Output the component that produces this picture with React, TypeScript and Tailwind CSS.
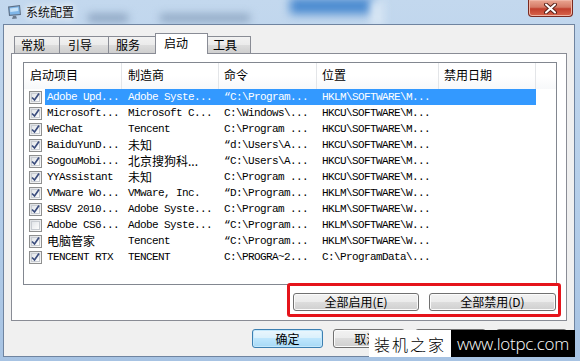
import React from "react";

type Row = { on: boolean; name: string; maker: string; cmd: string; loc: string; sel?: boolean };

const rows: Row[] = [
  { on: true, name: "Adobe Upd...", maker: "Adobe Syste...", cmd: "“C:\\Program...", loc: "HKLM\\SOFTWARE\\M...", sel: true },
  { on: true, name: "Microsoft...", maker: "Microsoft C...", cmd: "C:\\Windows\\...", loc: "HKCU\\SOFTWARE\\M..." },
  { on: true, name: "WeChat", maker: "Tencent", cmd: "C:\\Program ...", loc: "HKCU\\SOFTWARE\\M..." },
  { on: true, name: "BaiduYunD...", maker: "未知", cmd: "“d:\\Users\\A...", loc: "HKCU\\SOFTWARE\\M..." },
  { on: true, name: "SogouMobi...", maker: "北京搜狗科...", cmd: "“C:\\Users\\A...", loc: "HKCU\\SOFTWARE\\M..." },
  { on: true, name: "YYAssistant", maker: "未知", cmd: "C:\\Program ...", loc: "HKCU\\SOFTWARE\\M..." },
  { on: true, name: "VMware Wo...", maker: "VMware, Inc.", cmd: "“D:\\Program...", loc: "HKLM\\SOFTWARE\\W..." },
  { on: true, name: "SBSV 2010...", maker: "Adobe Syste...", cmd: "C:\\Program ...", loc: "HKLM\\SOFTWARE\\W..." },
  { on: false, name: "Adobe CS6...", maker: "Adobe Syste...", cmd: "“C:\\Program...", loc: "HKLM\\SOFTWARE\\W..." },
  { on: true, name: "电脑管家", maker: "Tencent", cmd: "“C:\\Program...", loc: "HKLM\\SOFTWARE\\W..." },
  { on: true, name: "TENCENT RTX", maker: "TENCENT", cmd: "C:\\PROGRA~2...", loc: "C:\\ProgramData\\..." },
];

const tabs = [
  { label: "常规", w: "w-[46px] pl-[6px]" },
  { label: "引导", w: "w-[50px] pl-[8px]" },
  { label: "服务", w: "w-[48px] pl-[7px]" },
  { label: "启动", w: "w-[53px] pl-[8px]", active: true },
  { label: "工具", w: "w-[44px] pl-[5px]" },
];

const cjk = /[\u4e00-\u9fff]/;
const mono = "font-['Liberation_Mono','Noto_Sans_CJK_SC',monospace] text-[11px] tracking-[-0.6px]";
const han = "font-['Noto_Sans_CJK_SC',sans-serif] text-[12px]";

const btn =
  "flex items-center justify-center rounded-[3px] border border-[#707070] bg-[linear-gradient(180deg,#f2f2f2_0%,#ebebeb_50%,#dddddd_50%,#cfcfcf_100%)] shadow-[inset_0_0_0_1px_#fbfbfb] text-[12px] text-black";

function Cell({ text, className }: { text: string; className: string }) {
  return (
    <div className={`${className} ${cjk.test(text) ? han : mono} overflow-hidden whitespace-nowrap leading-[16px]`}>
      {text}
    </div>
  );
}

function Check({ on }: { on: boolean }) {
  return (
    <div className="flex h-[13px] w-[13px] items-center justify-center border border-[#8e8f8f] bg-[linear-gradient(135deg,#dcdfe3,#fbfbfb)]">
      <div className="flex h-[9px] w-[9px] items-center justify-center border border-[#c8ccd2] bg-[linear-gradient(135deg,#e2e5e9,#fdfdfd)]">
        {on && (
          <svg width="9" height="9" viewBox="0 0 9 9" className="overflow-visible">
            <path d="M1 4.5 L3.5 7 L8 0.5" fill="none" stroke="#3b4d7e" strokeWidth="1.7" />
          </svg>
        )}
      </div>
    </div>
  );
}

function AppIcon() {
  return (
    <svg width="16" height="16" viewBox="0 0 16 16">
      <path d="M1 2.5 L13 1 L14 11 L2 12 Z" fill="#5d6f86" />
      <path d="M2.3 3.5 L12.2 2.3 L12.9 9.9 L3 10.8 Z" fill="#7fb6e8" />
      <path d="M3 4.5 L11 3.6 L11.4 7 L3.4 8 Z" fill="#c6e2f8" />
      <path d="M6 12 L9 11.7 L10 14.5 L5 15 Z" fill="#6c7c90" />
    </svg>
  );
}

export default function App() {
  return (
    <div className="relative h-[361px] w-[580px] overflow-hidden bg-[linear-gradient(180deg,#c3d8ee_0%,#b3cde9_60%,#a7c3e3_100%)] font-['Noto_Sans_CJK_SC',sans-serif]">
      {/* blurred things behind the glass */}
      <div className="absolute left-[88px] top-[14px] h-[8px] w-[40px] bg-[#8aa2bf] blur-[4px]" />
      <div className="absolute left-[160px] top-[14px] h-[8px] w-[90px] bg-[#8ea6c2] blur-[4px]" />
      <div className="absolute left-[290px] top-[-2px] h-[16px] w-[85px] bg-[#4a8ad0] blur-[5px]" />
      <div className="absolute left-[370px] top-[0px] h-[26px] w-[14px] bg-[#d8e6f4] blur-[4px]" />

      <div className="relative flex h-[24px] items-start">
        <div className="ml-[7px] mt-[4px]">
          <AppIcon />
        </div>
        <div className="ml-[3px] mt-[4px] text-[12px] leading-[16px] text-[#111] [text-shadow:0_0_6px_#fff,0_0_10px_#fff]">
          系统配置
        </div>
        <div className="ml-auto mr-[7px] flex h-[17px] w-[45px] items-center justify-center rounded-b-[4px] border border-t-0 border-[#7a2a20] bg-[linear-gradient(180deg,#eaa692_0%,#d57a66_45%,#c13f2d_55%,#d8664d_100%)] shadow-[inset_0_0_0_1px_#f0b5a5]">
          <svg width="13" height="11" viewBox="0 0 13 11">
            <path d="M2 1.5 L11 9.5 M11 1.5 L2 9.5" stroke="#5a2219" strokeWidth="4" strokeLinecap="round" />
            <path d="M2 1.5 L11 9.5 M11 1.5 L2 9.5" stroke="#fff" strokeWidth="2" strokeLinecap="round" />
          </svg>
        </div>
      </div>

      <div className="relative ml-[3px] h-[333px] w-[572px] border border-[#6f84a0] bg-[#f0f0f0] px-[7px] pt-[8px]">
        <div className="ml-[3px] flex h-[20px] items-end">
          {tabs.map((t, i) => (
            <div
              key={t.label}
              className={`${t.w} ${i > 0 ? "-ml-px" : ""} flex items-start border border-b-0 border-[#898c95] text-[12px] leading-[16px] text-black ${
                t.active
                  ? "relative z-10 -mb-px h-[21px] bg-white pt-[1px]"
                  : "h-[17px] bg-[linear-gradient(180deg,#f2f2f2_0%,#ebebeb_50%,#dddddd_50%,#cfcfcf_100%)] pt-0"
              }`}
            >
              {t.label}
            </div>
          ))}
        </div>

        <div className="h-[268px] border border-[#898c95] bg-white pl-[11px] pr-[9px] pt-[8px]">
          <div className="h-[223px] border border-[#828790] bg-white">
            <div className="flex h-[26px] bg-[linear-gradient(180deg,#ffffff_0%,#ffffff_50%,#f7f8fa_100%)] text-[12px] leading-[24px] text-black">
              <div className="w-[98px] border-r border-[#e3e5e8] pl-[6px]">启动项目</div>
              <div className="w-[97px] border-r border-[#e3e5e8] pl-[6px]">制造商</div>
              <div className="w-[98px] border-r border-[#e3e5e8] pl-[5px]">命令</div>
              <div className="w-[122px] border-r border-[#e3e5e8] pl-[5px]">位置</div>
              <div className="w-[97px] border-r border-[#e3e5e8] pl-[5px]">禁用日期</div>
            </div>
            {rows.map((r) => (
              <div key={r.name} className="flex h-[16px] items-center">
                <div className="flex w-[21px] items-center pl-[5px]">
                  <Check on={r.on} />
                </div>
                <div className={`flex h-[16px] w-[491px] ${r.sel ? "bg-[#3399ff] text-white" : "text-black"}`}>
                  <Cell text={r.name} className="w-[77px] pl-[2px]" />
                  <Cell text={r.maker} className="w-[97px] pl-[6px]" />
                  <Cell text={r.cmd} className="w-[98px] pl-[5px]" />
                  <Cell text={r.loc} className="w-[122px] pl-[5px]" />
                </div>
              </div>
            ))}
          </div>

          <div className="mr-px mt-[8px] flex justify-end gap-[10px]">
            <div className={`${btn} h-[18px] w-[126px]`}>全部启用(E)</div>
            <div className={`${btn} h-[18px] w-[127px]`}>全部禁用(D)</div>
          </div>
        </div>

        {/* bottom buttons; the last two sit fully under the watermark */}
        <div className="ml-[241px] mt-[8px] flex gap-[10px]">
          <div className="flex h-[19px] w-[72px] items-center justify-center rounded-[3px] border border-[#3c7fb1] bg-[linear-gradient(180deg,#eaf6fd_0%,#d9f0fc_50%,#bee6fd_50%,#a7d9f5_100%)] shadow-[inset_0_0_0_1px_#c4e8fc] text-[12px]">
            确定
          </div>
          <div className={`${btn} h-[19px] w-[72px] justify-start pl-[20px]`}>取消</div>
          <div className={`${btn} h-[19px] w-[72px]`} />
          <div className={`${btn} h-[19px] w-[72px]`} />
        </div>
      </div>

      {/* red annotation */}
      <div className="absolute left-[287px] top-[283px] h-[34px] w-[274px] rounded-[3px] border-[3px] border-[#e5141b]" />

      {/* watermark */}
      <div className="absolute left-[369px] top-[330px] flex h-[27px]">
        <div className="flex w-[82px] items-center justify-center bg-white font-['Noto_Sans_CJK_SC',serif] text-[16px] font-light tracking-[2px] text-black">
          装机之家
        </div>
        <div className="flex w-[124px] items-center justify-center bg-black font-['Open_Sans',sans-serif] text-[17px] font-light tracking-[-0.3px] text-white">
          www.lotpc.com
        </div>
      </div>
    </div>
  );
}
